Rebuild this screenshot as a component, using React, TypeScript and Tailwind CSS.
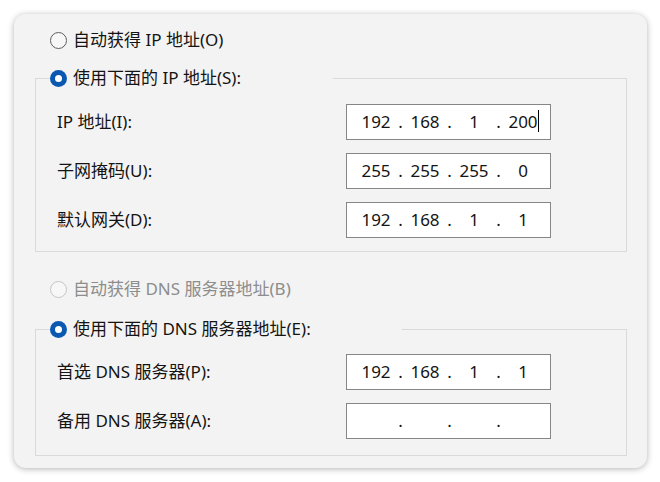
import React from 'react'

const FONT = { fontFamily: '"Noto Sans", "Noto Sans CJK SC", sans-serif' }

function Radio({ checked, disabled }: { checked?: boolean; disabled?: boolean }) {
  if (checked) {
    return (
      <span className="flex h-[17px] w-[17px] shrink-0 items-center justify-center rounded-full bg-[#0a58b0]">
        <span className="h-[7px] w-[7px] rounded-full bg-white" />
      </span>
    )
  }
  return (
    <span
      className={
        disabled
          ? 'h-[17px] w-[17px] shrink-0 rounded-full border border-[#c4c4c4] bg-[#f7f7f7]'
          : 'h-[17px] w-[17px] shrink-0 rounded-full border border-[#5e5e5e] bg-[#f7f7f7]'
      }
    />
  )
}

function IpBox({ parts, caret }: { parts: string[]; caret?: boolean }) {
  return (
    <div className="flex h-[36px] w-[205px] items-center border border-[#868686] bg-white pl-[9px] text-[17px] text-[#141414]">
      {parts.map((p, i) => (
        <React.Fragment key={i}>
          <span className="relative w-[40px] text-center">
            {p}
            {caret && i === 3 && <span className="absolute right-[4px] top-[1px] h-[22px] w-px bg-black" />}
          </span>
          {i < 3 && <span className="w-[9px] text-center">.</span>}
        </React.Fragment>
      ))}
    </div>
  )
}

function Row({ label, parts, caret }: { label: string; parts: string[]; caret?: boolean }) {
  return (
    <div className="flex items-center">
      <span className="w-[289px] text-[17px] text-[#141414]">{label}</span>
      <IpBox parts={parts} caret={caret} />
    </div>
  )
}

export default function App() {
  return (
    <div className="h-[482px] w-[660px] bg-white pl-[14px] pt-[14px]" style={FONT}>
      <div className="w-[633px] rounded-[12px] bg-[#f3f3f3] pb-[12px] pl-[21px] pr-[20px] pt-[14px] shadow-[0_1px_6px_rgba(0,0,0,0.3)]">
        <div className="flex h-[24px] items-center gap-[6px] pl-[15px] text-[17px] text-[#141414]">
          <Radio />
          <span>自动获得 IP 地址(O)</span>
        </div>

        <fieldset className="mt-[14px] border border-[#dadada] pb-[13px] pt-[14px]">
          <legend className="ml-[14px] flex h-[24px] w-[283px] items-center gap-[6px] text-[17px] text-[#141414]">
            <Radio checked />
            <span>使用下面的 IP 地址(S):</span>
          </legend>
          <div className="flex flex-col gap-[13px] pl-[21px]">
            <Row label="IP 地址(I):" parts={['192', '168', '1', '200']} caret />
            <Row label="子网掩码(U):" parts={['255', '255', '255', '0']} />
            <Row label="默认网关(D):" parts={['192', '168', '1', '1']} />
          </div>
        </fieldset>

        <div className="mt-[25px] flex h-[24px] items-center gap-[6px] pl-[15px] text-[17px] text-[#8d8d8d]">
          <Radio disabled />
          <span>自动获得 DNS 服务器地址(B)</span>
        </div>

        <fieldset className="mt-[16px] border border-[#dadada] pb-[16px] pt-[13px]">
          <legend className="ml-[14px] flex h-[24px] w-[352px] items-center gap-[6px] text-[17px] text-[#141414]">
            <Radio checked />
            <span>使用下面的 DNS 服务器地址(E):</span>
          </legend>
          <div className="flex flex-col gap-[13px] pl-[21px]">
            <Row label="首选 DNS 服务器(P):" parts={['192', '168', '1', '1']} />
            <Row label="备用 DNS 服务器(A):" parts={['', '', '', '']} />
          </div>
        </fieldset>
      </div>
    </div>
  )
}
